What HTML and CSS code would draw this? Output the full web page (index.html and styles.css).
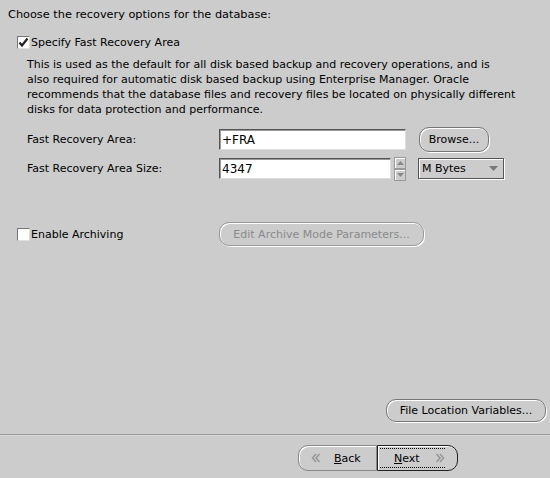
FILE: index.html
```html
<!DOCTYPE html>
<html>
<head>
<meta charset="utf-8">
<link rel="stylesheet" href="styles.css">
</head>
<body>
<div class="page">
  <div class="content">
    <div class="title">Choose the recovery options for the database:</div>
    <label class="check-row first">
      <span class="checkbox checked"><svg width="11" height="11" viewBox="0 0 11 11"><path d="M1.5 5.5 L4 8.5 L9.5 1.5" fill="none" stroke="#222" stroke-width="2.2"/></svg></span>
      <span>Specify Fast Recovery Area</span>
    </label>
    <p class="desc">This is used as the default for all disk based backup and recovery operations, and is<br>also required for automatic disk based backup using Enterprise Manager. Oracle<br>recommends that the database files and recovery files be located on physically different<br>disks for data protection and performance.</p>
    <div class="form">
      <div class="field-row row1">
        <span class="label">Fast Recovery Area:</span>
        <span class="input wide">+FRA</span>
        <span class="btn browse">Browse...</span>
      </div>
      <div class="field-row row2">
        <span class="label">Fast Recovery Area Size:</span>
        <span class="input narrow">4347</span>
        <span class="spinner">
          <span class="spin up"><svg width="7" height="4" viewBox="0 0 7 4"><path d="M0 4 L3.5 0 L7 4 Z" fill="#888"/></svg></span>
          <span class="spin down"><svg width="7" height="4" viewBox="0 0 7 4"><path d="M0 0 L3.5 4 L7 0 Z" fill="#888"/></svg></span>
        </span>
        <span class="select"><span>M Bytes</span><svg width="9" height="5" viewBox="0 0 9 5"><path d="M0 0 L4.5 5 L9 0 Z" fill="#777"/></svg></span>
      </div>
    </div>
    <div class="archive-row">
      <label class="check-row arch">
        <span class="checkbox"></span>
        <span>Enable Archiving</span>
      </label>
      <span class="btn disabled editarch">Edit Archive Mode Parameters...</span>
    </div>
    <div class="spacer"></div>
    <div class="bottom-right">
      <span class="btn filevars">File Location Variables...</span>
    </div>
  </div>
  <div class="separator"></div>
  <div class="nav">
    <span class="navbtn back">
      <svg width="10" height="10" viewBox="0 0 10 10"><path d="M5 1 L1.5 5 L5 9 M8.5 1 L5 5 L8.5 9" fill="none" stroke="#999" stroke-width="1.6"/></svg>
      <span class="navlabel"><u>B</u>ack</span>
    </span>
    <span class="navbtn next">
      <span class="focus">
        <span class="navlabel"><u>N</u>ext</span>
        <svg width="10" height="10" viewBox="0 0 10 10"><path d="M1.5 1 L5 5 L1.5 9 M5 1 L8.5 5 L5 9" fill="none" stroke="#999" stroke-width="1.6"/></svg>
      </span>
    </span>
  </div>
</div>
</body>
</html>
```
FILE: styles.css
```css
html, body {
  margin: 0;
  padding: 0;
  background: #cccccc;
}
body {
  font-family: "DejaVu Sans", "Liberation Sans", sans-serif;
  font-size: 11px;
  color: #000;
  width: 550px;
  height: 478px;
  overflow: hidden;
}
.page {
  display: flex;
  flex-direction: column;
  height: 478px;
}
.content {
  flex: 1;
  display: flex;
  flex-direction: column;
  padding: 0 4px 0 0;
}
.title {
  margin: 7px 0 0 8px;
  line-height: 15px;
  font-size: 11.3px;
}
.check-row {
  display: flex;
  align-items: center;
  gap: 1px;
  line-height: 15px;
}
.check-row.first {
  margin: 13px 0 0 17px;
}
.checkbox {
  width: 11px;
  height: 11px;
  background: #fff;
  border: 1px solid #777;
  border-right-color: #ddd;
  border-bottom-color: #ddd;
  display: inline-flex;
  align-items: center;
  justify-content: center;
  box-sizing: content-box;
}
.desc {
  margin: 7px 0 0 27px;
  line-height: 15px;
}
.form {
  margin: 11px 0 0 27px;
  display: flex;
  flex-direction: column;
  gap: 6px;
}
.field-row {
  display: flex;
  align-items: center;
  height: 23px;
}
.label {
  width: 192px;
  flex: none;
}
.input {
  height: 21px;
  background: #fff;
  border: 1px solid #555;
  border-right-color: #ddd;
  border-bottom-color: #ddd;
  box-shadow: inset 1px 1px 0 #999;
  display: flex;
  align-items: center;
  padding-left: 2px;
  box-sizing: border-box;
  font-size: 12px;
}
.input.wide { width: 187px; }
.input.narrow { width: 172px; }
.btn {
  display: inline-flex;
  align-items: center;
  justify-content: center;
  border: 1px solid #777;
  border-radius: 10px;
  box-shadow: inset 1px 1px 0 #fff, 1px 1px 0 #fff;
  background: #cccccc;
  box-sizing: border-box;
  height: 23px;
}
.browse {
  width: 70px;
  margin-left: 13px;
  height: 25px;
}
.spinner {
  display: flex;
  flex-direction: column;
  width: 12px;
  margin-left: 3px;
  height: 24px;
  gap: 0;
}
.spin {
  flex: 1;
  border: 1px solid #999;
  box-shadow: inset 1px 1px 0 #fff;
  display: flex;
  align-items: center;
  justify-content: center;
  box-sizing: border-box;
}
.select {
  margin-left: 12px;
  width: 86px;
  height: 21px;
  border: 1px solid #555;
  box-shadow: inset 1px 1px 0 #fff, 1px 1px 0 #fff;
  display: flex;
  align-items: center;
  justify-content: space-between;
  padding: 0 5px 0 3px;
  box-sizing: border-box;
}
.archive-row {
  margin: 42px 0 0 17px;
  display: flex;
  align-items: center;
}
.check-row.arch {
  width: 202px;
  flex: none;
}
.editarch {
  width: 205px;
  height: 24px;
  color: #8a8a8a;
  border-color: #999;
}
.spacer { flex: 1; }
.bottom-right {
  display: flex;
  justify-content: flex-end;
  margin-bottom: 12px;
}
.filevars {
  width: 160px;
  height: 23px;
}
.separator {
  height: 1px;
  background: #999;
  border-bottom: 1px solid #d8d8d8;
}
.nav {
  display: flex;
  justify-content: flex-start;
  padding: 9px 0 7px 298px;
}
.navbtn {
  height: 26px;
  display: flex;
  align-items: center;
  box-sizing: border-box;
  background: #cccccc;
}
.back {
  width: 79px;
  border: 1px solid #888;
  border-radius: 10px 0 0 10px;
  box-shadow: inset 1px 1px 0 #fff;
  padding-left: 12px;
  gap: 13px;
}
.next {
  width: 81px;
  border: 1px solid #222;
  border-radius: 0 10px 10px 0;
  box-shadow: inset 1px 1px 0 #fff;
  padding: 2px 12px 2px 2px;
}
.focus {
  flex: 1;
  height: 100%;
  display: flex;
  align-items: center;
  justify-content: space-between;
  border-top: 1px dotted #000;
  border-bottom: 1px dotted #000;
  padding-left: 14px;
  box-sizing: border-box;
}
.navlabel u { text-decoration: underline; }
```
